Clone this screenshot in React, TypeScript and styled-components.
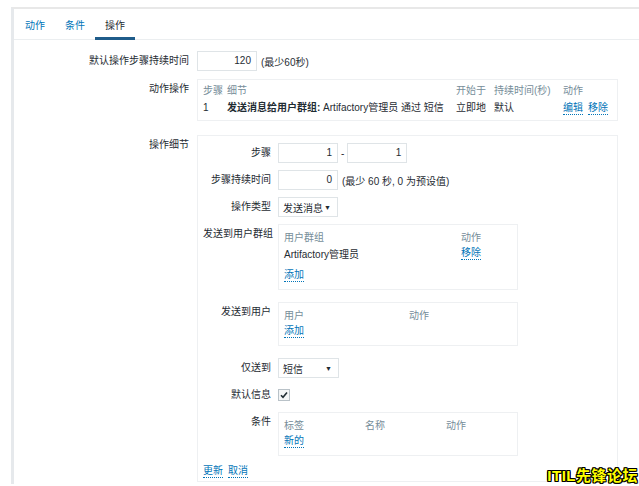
import React from 'react'
import styled, { createGlobalStyle } from 'styled-components'

const GlobalStyle = createGlobalStyle`
  body {
    margin: 0;
    background: #fff;
    font-family: 'Liberation Sans', 'Noto Sans CJK SC', sans-serif;
    font-size: 10px;
    color: #1f2c33;
  }
`

const Page = styled.div`
  margin: 7px 0 0 11px;
  border-top: 2px solid #e8e8e8;
  border-left: 3px solid #e6e9ec;
  height: 477px;
  box-sizing: border-box;
`

const TabBar = styled.div`
  display: flex;
  height: 30px;
  padding-left: 1px;
  border-bottom: 1px solid #ebeef0;
`

const Tab = styled.div<{ $active?: boolean }>`
  display: flex;
  align-items: center;
  padding: 0 10px;
  color: ${(p) => (p.$active ? '#1f2c33' : '#0275b8')};
  border-bottom: 3px solid ${(p) => (p.$active ? '#1f5c8a' : 'transparent')};
  margin-bottom: -1px;
  padding-top: 2px;
`

const Form = styled.div`
  display: grid;
  grid-template-columns: 175px 421px;
  column-gap: 8px;
  padding-top: 11px;
`

const Label = styled.div`
  text-align: right;
  line-height: 20px;
  white-space: nowrap;
`

const Field = styled.div<{ $mb?: number }>`
  display: flex;
  align-items: center;
  gap: 4px;
  min-height: 20px;
  margin-bottom: ${(p) => p.$mb ?? 8}px;
`

const TextInput = styled.div`
  width: 60px;
  height: 20px;
  box-sizing: border-box;
  border: 1px solid #dfe4e7;
  padding-right: 5px;
  text-align: right;
  line-height: 18px;
  background: #fff;
`

const Hint = styled.span`
  color: #1f2c33;
`

const Box = styled.div`
  width: 100%;
  box-sizing: border-box;
  border: 1px solid #eef0f2;
`

const OpsTable = styled.div`
  display: grid;
  grid-template-columns: 24px 229px 38px 69px auto;
  padding: 2px 5px 4px;
  line-height: 17px;
`

const HeadCell = styled.div`
  color: #768d99;
`

const Cell = styled.div`
  white-space: nowrap;
  b {
    font-weight: bold;
  }
`

const Link = styled.span`
  color: #0275b8;
  border-bottom: 1px dotted #0275b8;
  line-height: 12px;
  display: inline-block;
  margin-right: 5px;
`

const DetailBox = styled(Box)`
  padding: 7px 0 4px 5px;
  height: 347px;
`

const SubForm = styled.div`
  display: grid;
  grid-template-columns: 68px 240px;
  column-gap: 7px;
  row-gap: 7px;
  align-items: start;
`

const SubField = styled.div<{ $gap?: number }>`
  display: flex;
  align-items: center;
  gap: ${(p) => p.$gap ?? 4}px;
  min-height: 20px;
`

const Select = styled.div<{ $w: number }>`
  width: ${(p) => p.$w}px;
  height: 20px;
  box-sizing: border-box;
  border: 1px solid #dfe4e7;
  display: flex;
  align-items: center;
  justify-content: space-between;
  padding: 0 6px 0 4px;
  &::after {
    content: '▼';
    font-size: 7px;
  }
`

const ListBox = styled(Box)<{ $mb?: number; $h: number }>`
  height: ${(p) => p.$h}px;
  padding: 3px 5px 5px;
  margin-bottom: ${(p) => p.$mb ?? 0}px;
`

const ListRow = styled.div<{ $cols: string; $h?: number; $mt?: number }>`
  display: grid;
  grid-template-columns: ${(p) => p.$cols};
  height: ${(p) => p.$h ?? 18}px;
  align-items: center;
  margin-top: ${(p) => p.$mt ?? 0}px;
`

const Check = styled.span`
  width: 12px;
  height: 12px;
  box-sizing: border-box;
  border: 1px solid #b9c2c8;
  background: #f3f5f6;
  display: flex;
  align-items: center;
  justify-content: center;
`

const Footer = styled.div`
  margin-top: 8px;
  line-height: 14px;
`

const Watermark = styled.div`
  position: absolute;
  right: 1px;
  bottom: 1px;
  font-size: 15px;
  font-weight: bold;
  color: #ffff00;
  letter-spacing: 0.5px;
  font-family: 'Liberation Sans', 'Noto Sans CJK SC', sans-serif;
  text-shadow: 1px 0 0 #000, -1px 0 0 #000, 0 1px 0 #000, 0 -1px 0 #000, 1px 1px 0 #000,
    -1px -1px 0 #000, 1px -1px 0 #000, -1px 1px 0 #000;
`

const Root = styled.div`
  position: relative;
  width: 639px;
  height: 486px;
  overflow: hidden;
`

export default function App() {
  return (
    <Root>
      <GlobalStyle />
      <Page>
        <TabBar>
          <Tab>动作</Tab>
          <Tab>条件</Tab>
          <Tab $active>操作</Tab>
        </TabBar>
        <Form>
          <Label>默认操作步骤持续时间</Label>
          <Field>
            <TextInput>120</TextInput>
            <Hint>(最少60秒)</Hint>
          </Field>

          <Label>动作操作</Label>
          <Field $mb={14}>
            <Box>
              <OpsTable>
                <HeadCell>步骤</HeadCell>
                <HeadCell>细节</HeadCell>
                <HeadCell>开始于</HeadCell>
                <HeadCell>持续时间(秒)</HeadCell>
                <HeadCell>动作</HeadCell>
                <Cell>1</Cell>
                <Cell>
                  <b>发送消息给用户群组:</b> Artifactory管理员 通过 短信
                </Cell>
                <Cell>立即地</Cell>
                <Cell>默认</Cell>
                <Cell>
                  <Link>编辑</Link>
                  <Link>移除</Link>
                </Cell>
              </OpsTable>
            </Box>
          </Field>

          <Label>操作细节</Label>
          <DetailBox>
            <SubForm>
              <Label>步骤</Label>
              <SubField $gap={3}>
                <TextInput>1</TextInput>
                <span>-</span>
                <TextInput>1</TextInput>
              </SubField>

              <Label>步骤持续时间</Label>
              <SubField>
                <TextInput>0</TextInput>
                <Hint>(最少 60 秒, 0 为预设值)</Hint>
              </SubField>

              <Label>操作类型</Label>
              <SubField>
                <Select $w={60}>发送消息</Select>
              </SubField>

              <Label>发送到用户群组</Label>
              <ListBox $h={66} $mb={5}>
                <ListRow $cols="177px auto" $h={16}>
                  <HeadCell>用户群组</HeadCell>
                  <HeadCell>动作</HeadCell>
                </ListRow>
                <ListRow $cols="177px auto">
                  <Cell>Artifactory管理员</Cell>
                  <Cell>
                    <Link>移除</Link>
                  </Cell>
                </ListRow>
                <ListRow $cols="auto" $mt={4}>
                  <Cell>
                    <Link>添加</Link>
                  </Cell>
                </ListRow>
              </ListBox>

              <Label>发送到用户</Label>
              <ListBox $h={44} $mb={5}>
                <ListRow $cols="125px auto" $h={16}>
                  <HeadCell>用户</HeadCell>
                  <HeadCell>动作</HeadCell>
                </ListRow>
                <ListRow $cols="auto">
                  <Cell>
                    <Link>添加</Link>
                  </Cell>
                </ListRow>
              </ListBox>

              <Label>仅送到</Label>
              <SubField>
                <Select $w={61}>短信</Select>
              </SubField>

              <Label>默认信息</Label>
              <SubField>
                <Check>
                  <svg width="8" height="8" viewBox="0 0 8 8">
                    <path d="M1 4.2 L3 6.3 L7 1.5" stroke="#1f2c33" strokeWidth="1.6" fill="none" />
                  </svg>
                </Check>
              </SubField>

              <Label>条件</Label>
              <ListBox $h={44}>
                <ListRow $cols="81px 81px auto" $h={16}>
                  <HeadCell>标签</HeadCell>
                  <HeadCell>名称</HeadCell>
                  <HeadCell>动作</HeadCell>
                </ListRow>
                <ListRow $cols="auto">
                  <Cell>
                    <Link>新的</Link>
                  </Cell>
                </ListRow>
              </ListBox>
            </SubForm>
            <Footer>
              <Link>更新</Link>
              <Link>取消</Link>
            </Footer>
          </DetailBox>
        </Form>
      </Page>
      <Watermark>ITIL先锋论坛</Watermark>
    </Root>
  )
}
